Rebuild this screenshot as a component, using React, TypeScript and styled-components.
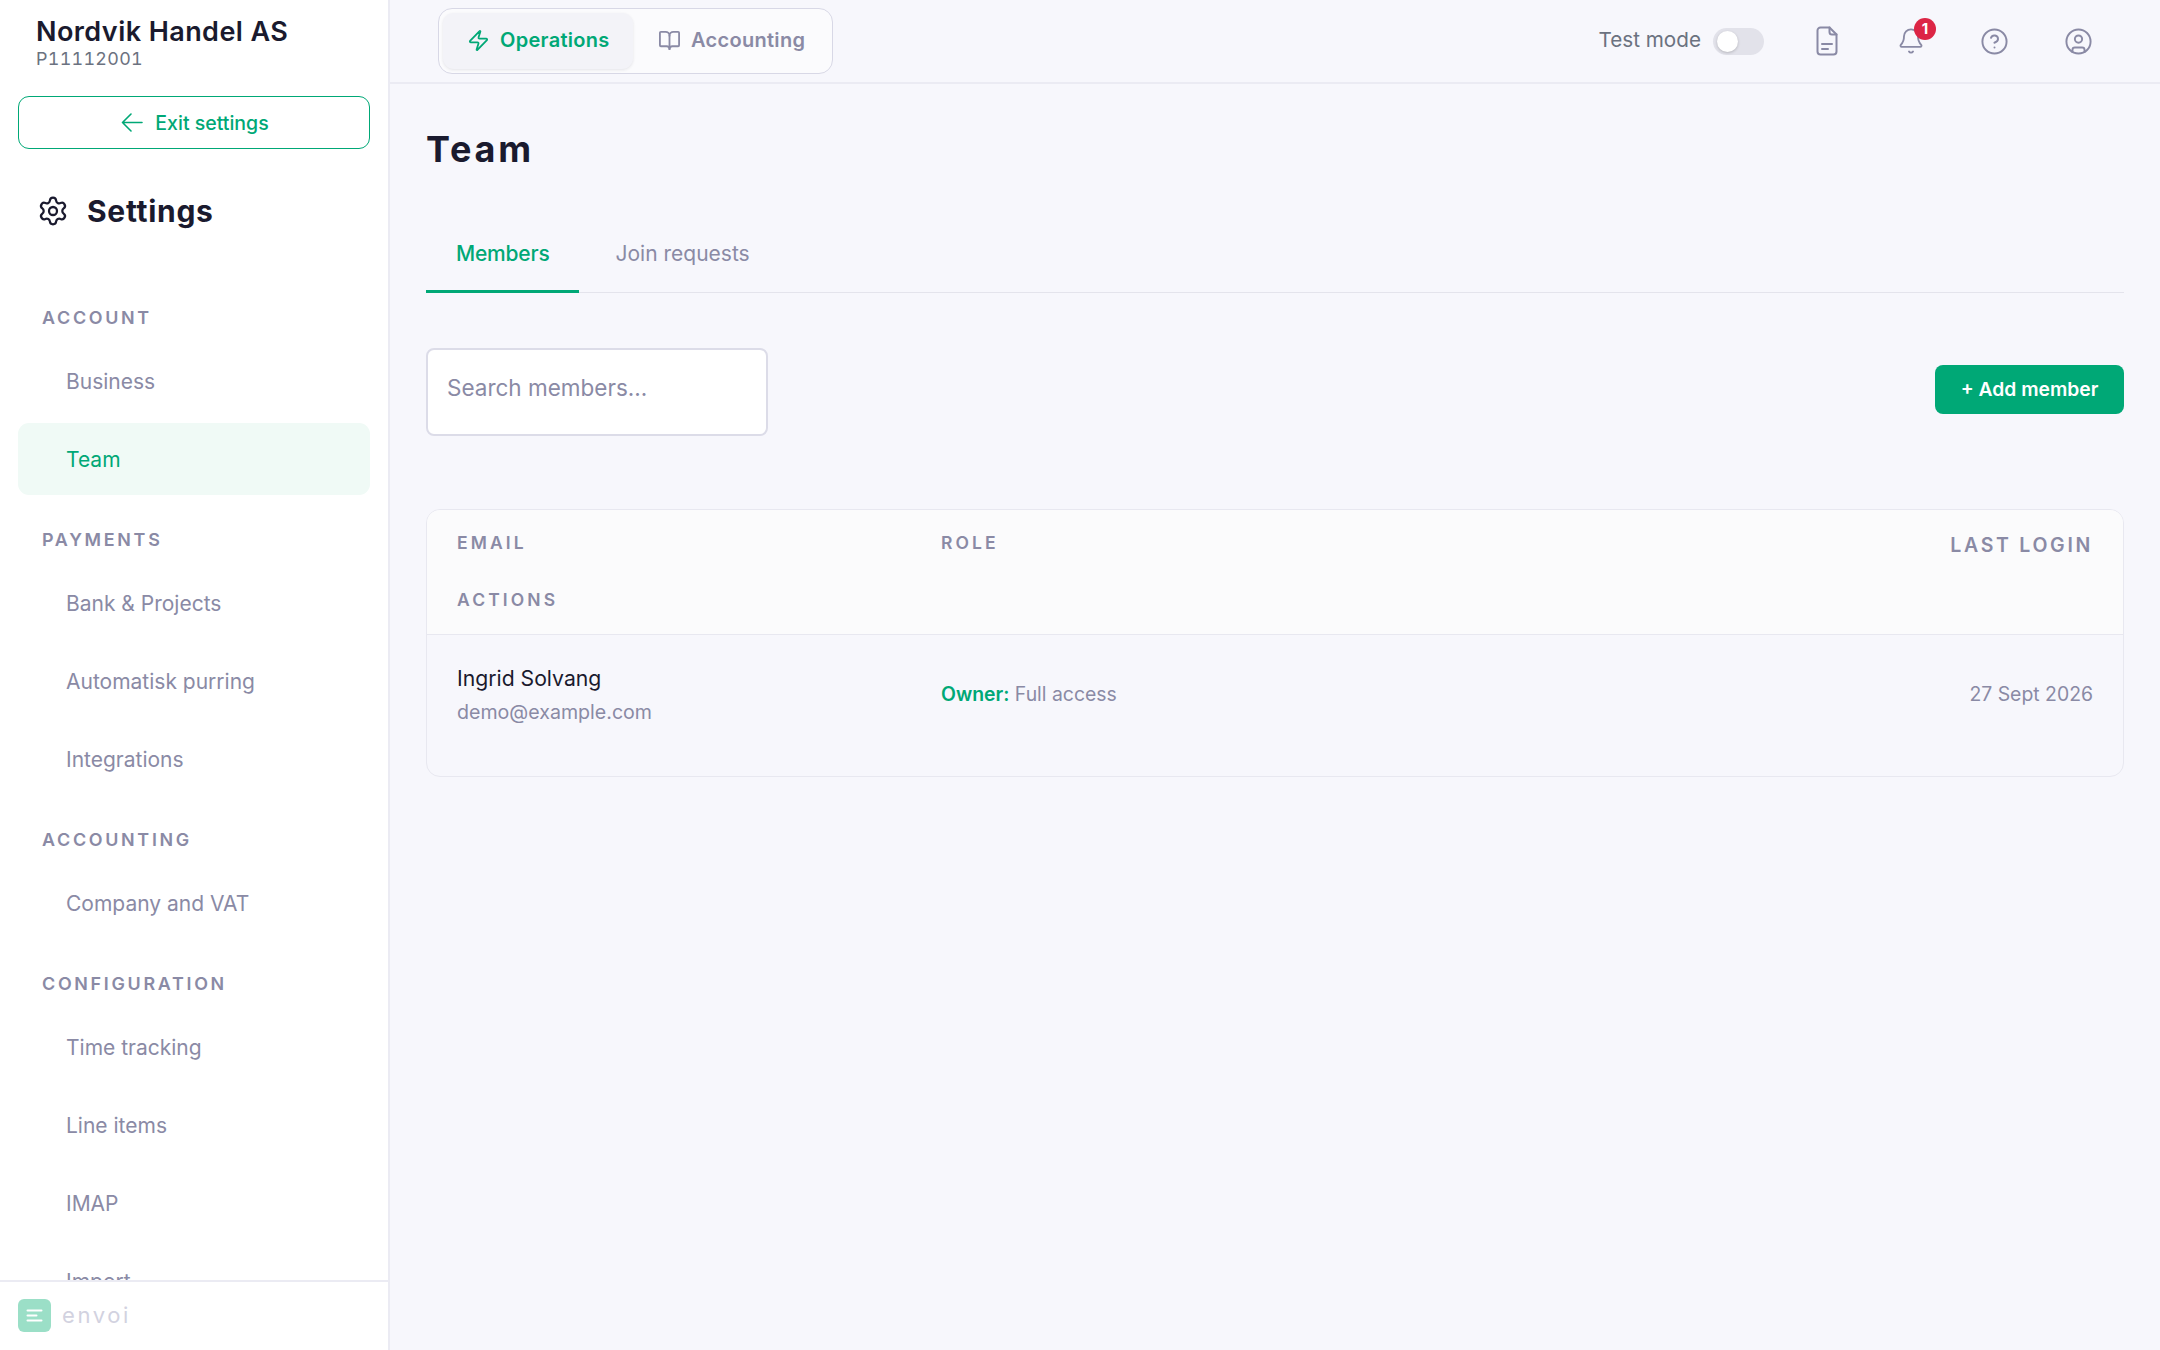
import React from "react";
import styled, { createGlobalStyle } from "styled-components";
import { Settings, Zap, BookOpen, Bell, CircleHelp, CircleUser } from "lucide-react";

const Global = createGlobalStyle`
  html, body { margin: 0; padding: 0; height: 100%; background: #f7f7fc; }
  #root { height: 100%; }
  * { box-sizing: border-box; }
  body { font-family: Inter, "Liberation Sans", sans-serif; color: #1a1a2e; }
`;

const Shell = styled.div`
  display: flex;
  width: 2160px;
  height: 1350px;
  overflow: hidden;
  background: #f7f7fc;
`;

const Sidebar = styled.aside`
  width: 390px;
  flex: none;
  display: flex;
  flex-direction: column;
  background: #ffffff;
  border-right: 2px solid #ebebf3;
`;

const SideHead = styled.div`
  padding: 15px 18px 0;
`;

const Company = styled.div`
  font-size: 27px;
  line-height: 33px;
  font-weight: 600;
  padding-left: 18px;
  letter-spacing: 0.43px;
`;

const Code = styled.div`
  font-size: 17.9px;
  font-feature-settings: "tnum" 1;
  line-height: 21px;
  padding-left: 18px;
  color: #6b7280;
  letter-spacing: 0.3px;
`;

const ExitButton = styled.button`
  margin-top: 27px;
  width: 352px;
  height: 53px;
  padding: 0 0 0 2px;
  display: flex;
  align-items: center;
  justify-content: center;
  gap: 12px;
  background: #fff;
  border: 1.5px solid #00a876;
  border-radius: 11px;
  color: #00a876;
  font: 500 19.5px Inter, sans-serif;
`;

const SettingsHead = styled.div`
  display: flex;
  align-items: center;
  gap: 18px;
  margin: 39px 0 0;
  padding-left: 37px;
  height: 46px;
  font-size: 30px;
  font-weight: 700;
  letter-spacing: 0.7px;
`;

const NavScroll = styled.nav`
  flex: 1;
  min-height: 0;
  overflow: hidden;
  padding: 75px 18px 0;
`;

const SectionLabel = styled.div<{ $first?: boolean }>`
  height: 18px;
  line-height: 18px;
  margin: ${(p) => (p.$first ? "0" : "36px")} 0 18px;
  padding-left: 24px;
  font-size: 17.9px;
  font-weight: 600;
  letter-spacing: 2.7px;
  color: #8a8aa5;
`;

const NavItem = styled.div<{ $active?: boolean }>`
  height: 72px;
  margin-bottom: 6px;
  display: flex;
  align-items: center;
  padding-left: 48px;
  border-radius: 11px;
  font-size: 21px;
  color: ${(p) => (p.$active ? "#00a876" : "#8a8aa5")};
  background: ${(p) => (p.$active ? "#f0faf6" : "transparent")};
`;

const SideFoot = styled.div`
  height: 70px;
  flex: none;
  border-top: 2px solid #ebebf3;
  display: flex;
  align-items: center;
  gap: 11px;
  padding: 0 18px 2px;
`;

const Logo = styled.div`
  width: 33px;
  height: 33px;
  border-radius: 6px;
  background: #9bdfc7;
  display: flex;
  align-items: center;
  justify-content: center;
`;

const Wordmark = styled.span`
  font-size: 22px;
  letter-spacing: 2.6px;
  color: #d2d2e0;
`;

const Main = styled.div`
  flex: 1;
  min-width: 0;
  display: flex;
  flex-direction: column;
`;

const TopBar = styled.header`
  height: 84px;
  flex: none;
  display: flex;
  align-items: flex-start;
  justify-content: space-between;
  padding: 8px 0 0 48px;
  border-bottom: 2px solid #ebebf3;
`;

const ModeGroup = styled.div`
  width: 395px;
  height: 66px;
  display: flex;
  gap: 0;
  padding: 4px;
  background: #fbfbfd;
  border: 1.5px solid #d8d8e6;
  border-radius: 14px;
`;

const ModeTab = styled.div<{ $active?: boolean }>`
  height: 56px;
  display: flex;
  align-items: center;
  gap: 10px;
  padding: 0 0 2px ${(p) => (p.$active ? "24px" : "25px")};
  width: ${(p) => (p.$active ? "190px" : "auto")};
  border-radius: 11px;
  font-size: 20px;
  font-weight: 600;
  letter-spacing: 0.3px;
  color: ${(p) => (p.$active ? "#00a876" : "#8a8aa5")};
  background: ${(p) => (p.$active ? "#f3f3f8" : "transparent")};
  box-shadow: ${(p) => (p.$active ? "0 1px 3px rgba(26,26,46,.1)" : "none")};
`;

const TopRight = styled.div`
  display: flex;
  align-items: center;
  height: 66px;
  padding-right: 65px;
`;

const TestLabel = styled.span`
  font-size: 20.7px;
  line-height: 26px;
  padding-bottom: 2px;
  color: #6b7280;
  margin-right: 12px;
`;

const Toggle = styled.div`
  position: relative;
  width: 51px;
  height: 27px;
  border-radius: 14px;
  background: #e2e2ea;
  margin-right: 46px;
`;

const Knob = styled.div`
  position: absolute;
  left: 4px;
  top: 3px;
  width: 21px;
  height: 21px;
  border-radius: 50%;
  background: #fff;
  box-shadow: 0 1px 3px rgba(0, 0, 0, 0.2);
`;

const IconButton = styled.div<{ $first?: boolean }>`
  position: relative;
  width: 33px;
  height: 33px;
  display: flex;
  align-items: center;
  justify-content: center;
  color: #8a8aa5;
  margin-left: ${(p) => (p.$first ? "0" : "51px")};
`;

const Badge = styled.span`
  position: absolute;
  top: -7px;
  right: -9px;
  width: 22px;
  height: 22px;
  border-radius: 50%;
  background: #dc2545;
  color: #fff;
  font-size: 15px;
  font-weight: 700;
  display: flex;
  align-items: center;
  justify-content: center;
`;

const Content = styled.main`
  flex: 1;
  padding: 0 36px 0 36px;
`;

const Title = styled.h1`
  margin: 42px 0 0;
  height: 46px;
  line-height: 46px;
  font-size: 36px;
  font-weight: 700;
  letter-spacing: 2.8px;
`;

const Tabs = styled.div`
  margin-top: 44px;
  display: flex;
  border-bottom: 1.5px solid #e4e4ec;
  height: 77px;
`;

const Tab = styled.div<{ $active?: boolean }>`
  height: 77px;
  padding: 0 29px 0 30px;
  margin-right: 7px;
  display: flex;
  align-items: center;
  font-size: 21px;
  font-weight: ${(p) => (p.$active ? 500 : 400)};
  letter-spacing: ${(p) => (p.$active ? "-0.2px" : "0")};
  color: ${(p) => (p.$active ? "#00a876" : "#8a8aa5")};
  border-bottom: 3px solid ${(p) => (p.$active ? "#00a876" : "transparent")};
`;

const Toolbar = styled.div`
  margin-top: 55px;
  display: flex;
  align-items: center;
  justify-content: space-between;
`;

const Search = styled.input`
  width: 342px;
  height: 88px;
  padding: 0 19px 10px;
  border: 2px solid #dcdce8;
  border-radius: 8px;
  background: #fff;
  font: 400 22.5px Inter, sans-serif;
  color: #1a1a2e;
  outline: none;
  &::placeholder {
    color: #8a8aa5;
    opacity: 1;
  }
`;

const AddButton = styled.button`
  width: 189px;
  height: 49px;
  margin-bottom: 6px;
  border: none;
  border-radius: 8px;
  background: #00a876;
  color: #fff;
  font: 600 19.3px Inter, sans-serif;
`;

const Table = styled.div`
  margin-top: 73px;
  height: 268px;
  border: 1.5px solid #e8e8f0;
  border-radius: 14px;
  overflow: hidden;
`;

const Columns = styled.div`
  display: grid;
  grid-template-columns: 484px 1fr auto;
  padding: 0 30px;
`;

const HeadRow = styled(Columns)`
  height: 125px;
  background: #fbfbfc;
  border-bottom: 1.5px solid #e8e8f0;
  grid-auto-rows: 57px;
  padding-top: 4px;
`;

const HeadCell = styled.div<{ $right?: boolean }>`
  display: flex;
  align-items: center;
  justify-content: ${(p) => (p.$right ? "flex-end" : "flex-start")};
  padding-top: ${(p) => (p.$right ? "5px" : "0")};
  font-size: ${(p) => (p.$right ? "19.5px" : "17.5px")};
  font-weight: 600;
  letter-spacing: ${(p) => (p.$right ? "2.7px" : "3.1px")};
  color: #8a8aa5;
`;

const BodyRow = styled(Columns)`
  padding-top: 26px;
  align-items: center;
`;

const Name = styled.div`
  font-size: 21.2px;
  line-height: 34px;
  color: #1a1a2e;
`;

const Email = styled.div`
  font-size: 19.6px;
  line-height: 34px;
  color: #8a8aa5;
`;

const Role = styled.div`
  font-size: 19.4px;
  padding-bottom: 2px;
  color: #8a8aa5;
  & > b {
    font-weight: 600;
    color: #00a876;
  }
`;

const LastLogin = styled.div`
  font-size: 19.4px;
  padding-bottom: 2px;
  color: #8a8aa5;
  text-align: right;
`;

const nav: { label: string; items: { t: string; active?: boolean }[] }[] = [
  { label: "ACCOUNT", items: [{ t: "Business" }, { t: "Team", active: true }] },
  { label: "PAYMENTS", items: [{ t: "Bank & Projects" }, { t: "Automatisk purring" }, { t: "Integrations" }] },
  { label: "ACCOUNTING", items: [{ t: "Company and VAT" }] },
  { label: "CONFIGURATION", items: [{ t: "Time tracking" }, { t: "Line items" }, { t: "IMAP" }, { t: "Import" }] },
];

const BackArrow = () => (
  <svg width="22" height="19" viewBox="0 0 22 19" fill="none" stroke="currentColor" strokeWidth="1.6" strokeLinecap="round" strokeLinejoin="round">
    <path d="M21 9.5H1.5M10 1L1.5 9.5L10 18" />
  </svg>
);

const FileIcon = () => (
  <svg width="22" height="30" viewBox="0 0 22 30" fill="none" stroke="currentColor" strokeWidth="2" strokeLinecap="round" strokeLinejoin="round">
    <path d="M13.5 1.5H4.5a3 3 0 0 0-3 3v21a3 3 0 0 0 3 3h13a3 3 0 0 0 3-3V8.5z" />
    <path d="M13.5 1.5V6a2.5 2.5 0 0 0 2.5 2.5h4.5" />
    <path d="M6 18h10M6 23h6" />
  </svg>
);

export default function App() {
  return (
    <>
      <Global />
      <Shell>
        <Sidebar>
          <SideHead>
            <Company>Nordvik Handel AS</Company>
            <Code>P11112001</Code>
            <ExitButton>
              <BackArrow />
              Exit settings
            </ExitButton>
          </SideHead>
          <SettingsHead>
            <Settings size={32} strokeWidth={1.7} />
            Settings
          </SettingsHead>
          <NavScroll>
            {nav.map((s, i) => (
              <React.Fragment key={s.label}>
                <SectionLabel $first={i === 0}>{s.label}</SectionLabel>
                {s.items.map((it) => (
                  <NavItem key={it.t} $active={it.active}>{it.t}</NavItem>
                ))}
              </React.Fragment>
            ))}
          </NavScroll>
          <SideFoot>
            <Logo>
              <svg width="17" height="13" viewBox="0 0 17 13" fill="none" stroke="#fff" strokeWidth="2" strokeLinecap="round">
                <path d="M1.5 1.5h14M1.5 6.5h9M1.5 11.5h14" />
              </svg>
            </Logo>
            <Wordmark>envoi</Wordmark>
          </SideFoot>
        </Sidebar>
        <Main>
          <TopBar>
            <ModeGroup>
              <ModeTab $active>
                <Zap size={23} strokeWidth={1.9} />
                Operations
              </ModeTab>
              <ModeTab>
                <BookOpen size={23} strokeWidth={1.9} />
                Accounting
              </ModeTab>
            </ModeGroup>
            <TopRight>
              <TestLabel>Test mode</TestLabel>
              <Toggle><Knob /></Toggle>
              <IconButton $first><FileIcon /></IconButton>
              <IconButton>
                <Bell size={28} strokeWidth={1.6} />
                <Badge>1</Badge>
              </IconButton>
              <IconButton><CircleHelp size={29} strokeWidth={1.6} /></IconButton>
              <IconButton><CircleUser size={29} strokeWidth={1.6} /></IconButton>
            </TopRight>
          </TopBar>
          <Content>
            <Title>Team</Title>
            <Tabs>
              <Tab $active>Members</Tab>
              <Tab>Join requests</Tab>
            </Tabs>
            <Toolbar>
              <Search placeholder="Search members..." />
              <AddButton>+ Add member</AddButton>
            </Toolbar>
            <Table>
              <HeadRow>
                <HeadCell>EMAIL</HeadCell>
                <HeadCell>ROLE</HeadCell>
                <HeadCell $right>LAST LOGIN</HeadCell>
                <HeadCell>ACTIONS</HeadCell>
              </HeadRow>
              <BodyRow>
                <div>
                  <Name>Ingrid Solvang</Name>
                  <Email>demo@example.com</Email>
                </div>
                <Role><b>Owner:</b> Full access</Role>
                <LastLogin>27 Sept 2026</LastLogin>
              </BodyRow>
            </Table>
          </Content>
        </Main>
      </Shell>
    </>
  );
}
